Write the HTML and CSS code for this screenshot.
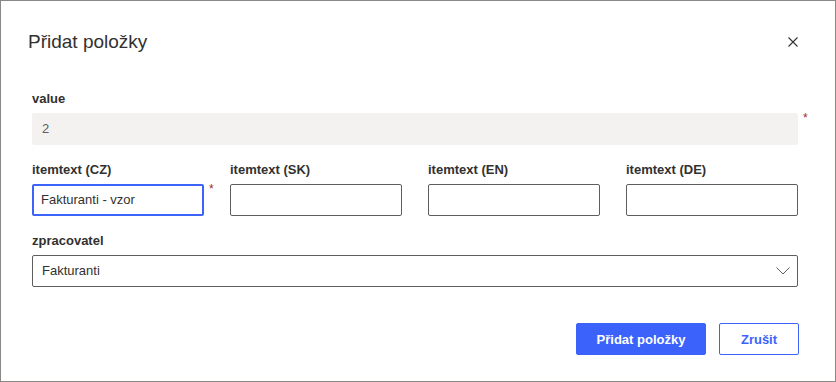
FILE: index.html
```html
<!DOCTYPE html>
<html lang="cs">
<head>
<meta charset="utf-8">
<title>Přidat položky</title>
<link rel="stylesheet" href="styles.css">
</head>
<body>
<div class="dialog">
  <div class="header">
    <h1 class="title">Přidat položky</h1>
    <button class="close" aria-label="Zavřít">
      <svg width="10" height="10" viewBox="0 0 10 10"><path d="M0.5 0.5 L9.5 9.5 M9.5 0.5 L0.5 9.5" stroke="#323130" stroke-width="1.1" fill="none"/></svg>
    </button>
  </div>
  <div class="form">
    <div class="field">
      <label class="label">value</label>
      <div class="control required">
        <div class="input readonly">2</div>
        <span class="star">*</span>
      </div>
    </div>
    <div class="row">
      <div class="field">
        <label class="label">itemtext (CZ)</label>
        <div class="control required">
          <div class="input focused">Fakturanti - vzor</div>
          <span class="star">*</span>
        </div>
      </div>
      <div class="field">
        <label class="label">itemtext (SK)</label>
        <div class="control"><div class="input"></div></div>
      </div>
      <div class="field">
        <label class="label">itemtext (EN)</label>
        <div class="control"><div class="input"></div></div>
      </div>
      <div class="field">
        <label class="label">itemtext (DE)</label>
        <div class="control"><div class="input"></div></div>
      </div>
    </div>
    <div class="field">
      <label class="label">zpracovatel</label>
      <div class="control">
        <div class="input select">
          <span>Fakturanti</span>
          <svg class="chevron" width="14" height="8" viewBox="0 0 14 8"><path d="M0.5 0.5 L7 7 L13.5 0.5" stroke="#605e5c" stroke-width="1" fill="none"/></svg>
        </div>
      </div>
    </div>
  </div>
  <div class="footer">
    <button class="btn primary">Přidat položky</button>
    <button class="btn secondary">Zrušit</button>
  </div>
</div>
</body>
</html>
```

FILE: styles.css
```css
* { box-sizing: border-box; }
html, body { margin: 0; padding: 0; background: #ffffff; }
body { font-family: "Liberation Sans", Arial, sans-serif; color: #323130; }

.dialog {
  width: 836px;
  height: 382px;
  border: 1px solid #8a8886;
  background: #ffffff;
  padding: 0 37px 0 31px;
}

.header {
  display: flex;
  justify-content: space-between;
  align-items: center;
  height: 28px;
  margin-top: 27px;
}
.title {
  margin: 0 0 0 -4px;
  font-size: 19px;
  line-height: 28px;
  font-weight: 400;
  color: #323130;
}
.close {
  border: 0;
  background: transparent;
  padding: 0;
  width: 10px;
  height: 10px;
  display: flex;
  cursor: pointer;
}

.form {
  margin-top: 33px;
  display: flex;
  flex-direction: column;
  gap: 15px;
}
.row {
  display: grid;
  grid-template-columns: repeat(4, 1fr);
  column-gap: 26px;
}
.label {
  display: block;
  font-size: 13px;
  line-height: 20px;
  font-weight: 700;
  color: #323130;
  margin-bottom: 4px;
}
.control { position: relative; }
.input {
  height: 32px;
  border: 1px solid #605e5c;
  border-radius: 2px;
  padding: 0 8px;
  font-size: 13px;
  line-height: 30px;
  color: #323130;
  background: #ffffff;
}
.input.readonly {
  border-color: #f3f2f1;
  background: #f3f2f1;
  color: #605e5c;
  padding-left: 9px;
}
.input.focused {
  border: 2px solid #3d64fa;
  line-height: 28px;
  padding-left: 7px;
}
.input.select {
  display: flex;
  align-items: center;
  justify-content: space-between;
  padding: 0 7px 0 9px;
}
.chevron { display: block; }
.star {
  position: absolute;
  left: calc(100% + 5px);
  top: -2px;
  font-size: 12px;
  line-height: 14px;
  color: #a4262c;
}

.footer {
  margin-top: 36px;
  display: flex;
  justify-content: flex-end;
  gap: 13px;
  margin-right: -1px;
}
.btn {
  height: 32px;
  border-radius: 2px;
  font-family: "Liberation Sans", Arial, sans-serif;
  font-size: 13px;
  font-weight: 700;
  cursor: pointer;
  padding: 0;
}
.btn.primary {
  width: 130px;
  background: #3b63fb;
  border: 1px solid #3b63fb;
  color: #ffffff;
}
.btn.secondary {
  width: 80px;
  background: #ffffff;
  border: 1px solid #3b63fb;
  color: #3b63fb;
}
```
